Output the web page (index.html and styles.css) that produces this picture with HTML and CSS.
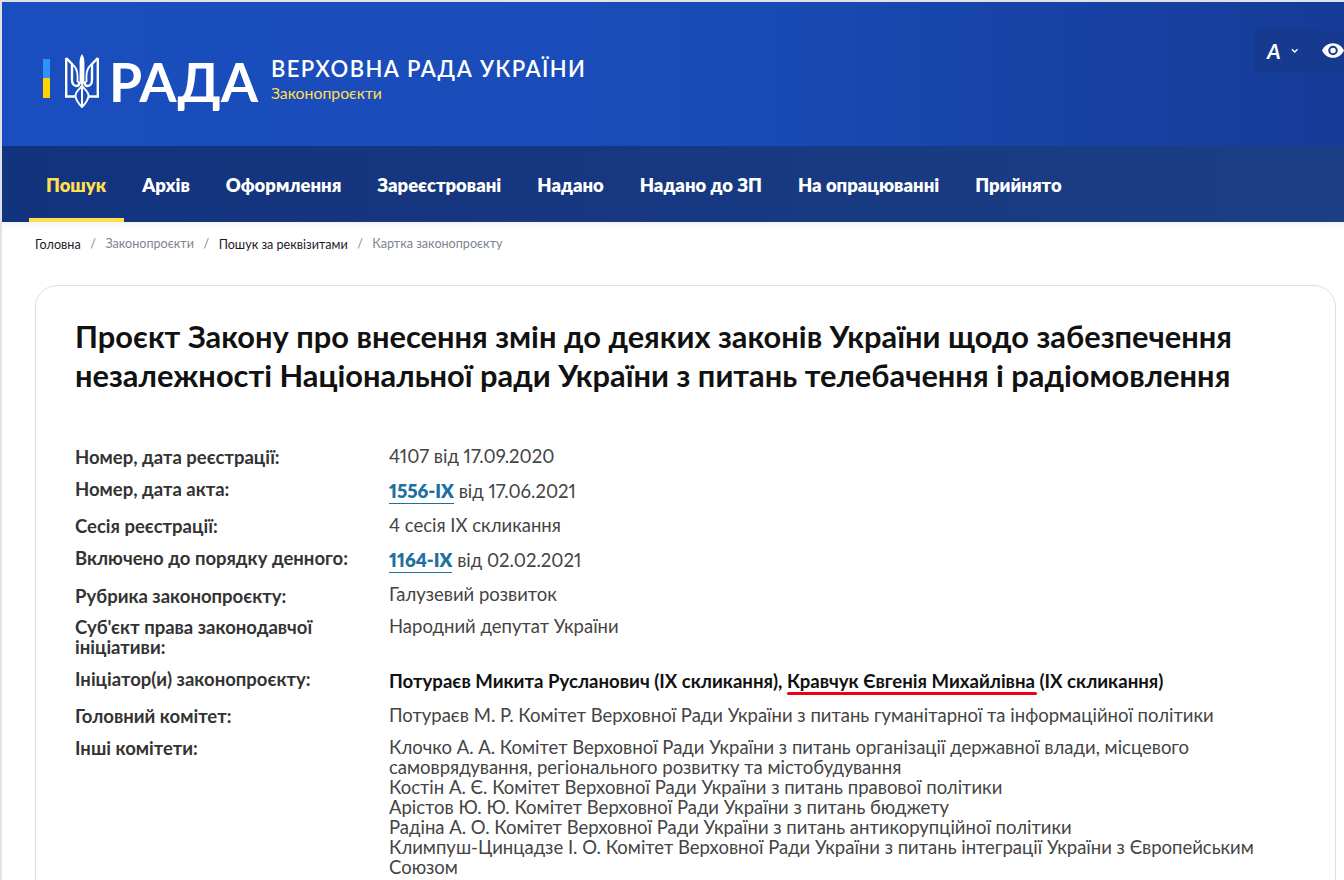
FILE: index.html
```html
<!DOCTYPE html>
<html lang="uk">
<head>
<meta charset="utf-8">
<title>Картка законопроєкту</title>
<link rel="stylesheet" href="styles.css">
</head>
<body>
<div class="page">
  <header class="header">
    <div class="logo">
      <span class="flag"></span>
      <svg class="trident" viewBox="0 0 34 54" fill="none" stroke="#fff" stroke-width="2.4">
        <path d="M17 0c-1.800 3-2.400 5-2.400 8v18c0 3 1 4 2.400 6 1.400-2 2.400-3 2.400-6V8c0-3-.6-5-2.400-8z" fill="#fff" stroke="none"/>
        <path d="M1.200 4v38.500h9.300M32.800 4v38.500h-9.300M1.200 4 7 10v16c0 3 1.500 6 4.500 6 2.500 0 3.500-2.500 1.800-4.500M32.800 4 27 10v16c0 3-1.500 6-4.500 6-2.500 0-3.500-2.500-1.800-4.500"/>
        <path d="M7 10c4 3 5.500 7 5.500 12v6M27 10c-4 3-5.500 7-5.500 12v6" stroke-width="1.800"/>
        <path d="M10.500 42c.5 5 3.500 8 6.500 11 3-3 6-6 6.500-11 .3-4-3-6-6.500-10-3.500 4-6.800 6-6.500 10zM17 34v19" stroke-width="2"/>
      </svg>
      <span class="rada">РАДА</span>
      <div class="logo-text">
        <span class="logo-title">ВЕРХОВНА РАДА УКРАЇНИ</span>
        <span class="logo-sub">Законопроєкти</span>
      </div>
    </div>
    <div class="tools">
      <span class="font-a">A</span>
      <svg class="chev" viewBox="0 0 8 6" fill="none" stroke="#fff" stroke-width="1.500"><path d="M1 1.200 4 4.200 7 1.200"/></svg>
      <svg class="eye" viewBox="0 0 24 16"><path fill="#fff" fill-rule="evenodd" d="M12 0C6.500 0 2.300 3.300 0 8c2.300 4.700 6.500 8 12 8s9.700-3.300 12-8c-2.300-4.700-6.500-8-12-8zm0 13.200A5.200 5.200 0 1 1 12 2.800a5.200 5.200 0 0 1 0 10.400zM12 5a3 3 0 1 0 0 6 3 3 0 0 0 0-6z"/></svg>
    </div>
  </header>
  <nav class="nav">
    <a class="nav-item active">Пошук</a>
    <a class="nav-item">Архів</a>
    <a class="nav-item">Оформлення</a>
    <a class="nav-item">Зареєстровані</a>
    <a class="nav-item">Надано</a>
    <a class="nav-item">Надано до ЗП</a>
    <a class="nav-item">На опрацюванні</a>
    <a class="nav-item">Прийнято</a>
  </nav>
  <div class="crumbs">
    <a class="crumb dark">Головна</a><span class="sep">/</span>
    <a class="crumb">Законопроєкти</a><span class="sep">/</span>
    <a class="crumb dark">Пошук за реквізитами</a><span class="sep">/</span>
    <a class="crumb">Картка законопроєкту</a>
  </div>
  <main class="card">
    <h1 class="title">Проєкт Закону про внесення змін до деяких законів України щодо забезпечення незалежності Національної ради України з питань телебачення і радіомовлення</h1>
    <div class="rows">
      <div class="row h35"><div class="label">Номер, дата реєстрації:</div><div class="value">4107 від 17.09.2020</div></div>
      <div class="row h34 up"><div class="label">Номер, дата акта:</div><div class="value"><a class="link">1556-IX</a> від 17.06.2021</div></div>
      <div class="row h35"><div class="label">Сесія реєстрації:</div><div class="value">4 сесія IX скликання</div></div>
      <div class="row h34 up"><div class="label">Включено до порядку денного:</div><div class="value"><a class="link">1164-IX</a> від 02.02.2021</div></div>
      <div class="row h32 down"><div class="label">Рубрика законопроєкту:</div><div class="value">Галузевий розвиток</div></div>
      <div class="row h55"><div class="label">Суб'єкт права законодавчої ініціативи:</div><div class="value">Народний депутат України</div></div>
      <div class="row h34 up"><div class="label">Ініціатор(и) законопроєкту:</div><div class="value strong">Потураєв Микита Русланович (IX скликання), <span class="marked">Кравчук Євгенія Михайлівна</span> (IX скликання)</div></div>
      <div class="row h32"><div class="label">Головний комітет:</div><div class="value">Потураєв М. Р. Комітет Верховної Ради України з питань гуманітарної та інформаційної політики</div></div>
      <div class="row"><div class="label">Інші комітети:</div><div class="value">Клочко А. А. Комітет Верховної Ради України з питань організації державної влади, місцевого самоврядування, регіонального розвитку та містобудування<br>Костін А. Є. Комітет Верховної Ради України з питань правової політики<br>Арістов Ю. Ю. Комітет Верховної Ради України з питань бюджету<br>Радіна А. О. Комітет Верховної Ради України з питань антикорупційної політики<br>Климпуш-Цинцадзе І. О. Комітет Верховної Ради України з питань інтеграції України з Європейським Союзом</div></div>
    </div>
  </main>
</div>
</body>
</html>
```

FILE: styles.css
```css
* { box-sizing: border-box; }
html, body { margin: 0; height: 100%; overflow: hidden; }
body { background: #dfe3e8; padding: 2px 0 0 2px; font-family: Lato, "Noto Sans", sans-serif; color: #333; font-variant-numeric: proportional-nums; }
.page { background: #fff; height: 878px; overflow: hidden; }

.header { height: 144px; background: linear-gradient(90deg, #1a4ebe 0%, #1a4cb8 50%, #153b98 100%); position: relative; display: flex; align-items: flex-start; }
.logo { display: flex; align-items: flex-start; margin: 52px 0 0 41px; }
.flag { width: 7px; height: 39px; margin-top: 5px; background: linear-gradient(180deg, #2f93ff 0 19px, #ffd500 19px); }
.trident { width: 34px; height: 54px; margin-left: 15px; }
.rada { font-size: 53.500px; font-weight: 700; line-height: 54px; color: #fff; margin-left: 10px; }
.logo-text { display: flex; flex-direction: column; margin: 1px 0 0 13px; }
.logo-title { font-size: 22px; line-height: 28px; color: #fff; letter-spacing: 1.4px; font-weight: 600; }
.logo-sub { font-size: 15.800px; line-height: 18px; color: #ffdf4f; margin-top: 1px; }

.tools { position: absolute; top: 27px; left: 1252px; right: 0; height: 43px; background: #163a90; display: flex; align-items: center; overflow: hidden; padding-left: 13px; }
.font-a { font-size: 21px; font-style: italic; font-weight: 700; color: #fff; width: 21px; }
.chev { width: 8px; height: 6px; margin-left: 4px; }
.eye { width: 22px; height: 15px; margin-left: 24px; flex: none; }

.nav { height: 76px; display: flex; background: linear-gradient(90deg, #12337d 0%, #1c3e84 100%); padding-left: 27px; }
.nav-item { padding: 0 18px; font-size: 18.450px; font-weight: 800; color: #fff; line-height: 78px; height: 76px; }
.nav-item.active { color: #ffdf4f; border-bottom: 4px solid #ffdf4f; padding-left: 17px; }

.crumbs { height: 63px; padding: 13px 0 0 33px; font-size: 12.600px; line-height: 18px; color: #7d8590; display: flex; align-items: flex-start; box-shadow: inset 0 8px 8px -8px rgba(0,0,0,.1); }
.crumb { color: #7d8590; }
.crumb.dark { color: #1a1a2a; margin-top: 1px; }
.sep { margin: 0 9.500px; }

.card { margin: 0 8px 0 33px; border: 1px solid #dcdfe3; border-radius: 22px; padding: 31px 39px 0; min-height: 700px; }
.title { font-size: 30.800px; line-height: 39px; font-weight: 700; color: #111; margin: 0 0 49px; }

.row { display: grid; grid-template-columns: 314px 1fr; font-size: 18.500px; line-height: 20px; }
.h32 { height: 32px; }
.h34 { height: 34px; }
.h35 { height: 35px; }
.h55 { height: 55px; }
.label { font-weight: 700; color: #333; padding: 3px 40px 0 0; }
.up .label { padding-top: 0; }
.down .label { padding-top: 4px; }
.value { color: #444; padding-top: 2px; }
.link { font-weight: 800; font-size: 18.600px; color: #20709f; display: inline-block; line-height: 20px; padding-bottom: 2px; border-bottom: 1px solid #20709f; }
.strong { font-weight: 700; color: #111; font-size: 18.600px; }
.marked { position: relative; }
.marked::after { content: ""; position: absolute; left: 0; right: -2px; bottom: -3px; height: 3.500px; border-radius: 2px; background: #ee0011; }
```
